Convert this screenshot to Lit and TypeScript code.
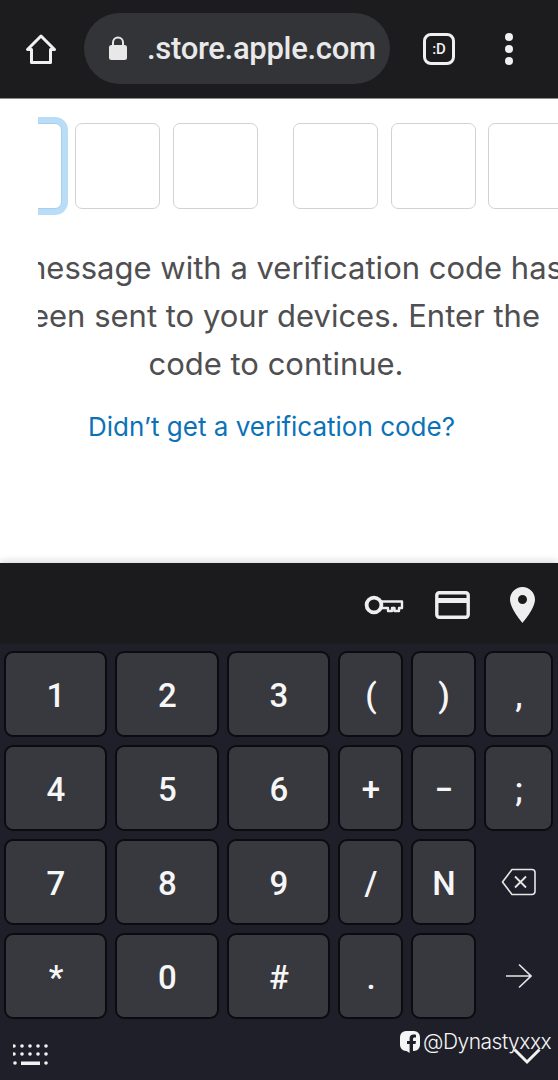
import { html, LitElement, css, svg } from 'lit';
import { customElement } from 'lit/decorators.js';

const ROWS = [
  ['1', '2', '3', '(', ')', ','],
  ['4', '5', '6', '+', '−', ';'],
  ['7', '8', '9', '/', 'N', 'back'],
  ['*', '0', '#', '.', '', 'next'],
];

const homeIcon = svg`<path d="M16 3 L2.5 16.5 H6.5 V29.5 H25.5 V16.5 H29.5 Z" fill="none" stroke="#f1f1f1" stroke-width="3" stroke-linejoin="round"/>`;
const lockIcon = svg`<path d="M5 9 V6.5 a5 5 0 0 1 10 0 V9" fill="none" stroke="#e8e8e8" stroke-width="2"/><rect x="1" y="9" width="18" height="15" rx="2.5" fill="#e8e8e8"/>`;
const keyIcon = svg`<path d="M15 6.5 H38 V13 H35 V16 H30.5 V13 H28 V16 H24 V13 H17" fill="none" stroke="#eee" stroke-width="2.4" stroke-linejoin="round"/><circle cx="10" cy="10" r="7.4" fill="none" stroke="#eee" stroke-width="3.8"/>`;
const cardIcon = svg`<rect x="1.8" y="1.8" width="31.4" height="24.4" rx="2.5" fill="none" stroke="#eee" stroke-width="3.4"/><rect x="2" y="7" width="31" height="5" fill="#eee"/>`;
const pinIcon = svg`<path fill-rule="evenodd" d="M12.5 0 C5.6 0 0 5.6 0 12.5 C0 21.5 12.5 36 12.5 36 C12.5 36 25 21.5 25 12.5 C25 5.6 19.4 0 12.5 0 Z M12.5 8 a4.5 4.5 0 1 1 0 9 a4.5 4.5 0 1 1 0 -9 Z" fill="#eee"/>`;
const backIcon = svg`<path d="M11 1.5 H31 a3 3 0 0 1 3 3 V23.5 a3 3 0 0 1 -3 3 H11 L1.5 14 Z" fill="none" stroke="#e6e6e6" stroke-width="1.6" stroke-linejoin="round"/><path d="M14 8.5 L25 19.5 M25 8.5 L14 19.5" stroke="#e6e6e6" stroke-width="1.8"/>`;
const nextIcon = svg`<path d="M1 13 H26 M14 1.5 L26 13 L14 24.5" fill="none" stroke="#e6e6e6" stroke-width="1.6"/>`;
const fbIcon = svg`<path d="M6 0 H14 a6 6 0 0 1 6 6 V14 a6 6 0 0 1 -6 6 H13 V13 H15.5 L16 10 H13 V8.2 C13 7 13.5 6.5 14.7 6.5 H16 V3.8 C15 3.6 14.3 3.5 13.4 3.5 C11 3.5 9.6 5 9.6 7.6 V10 H7 V13 H9.6 V22 L6.5 20 H6 a6 6 0 0 1 -6 -6 V6 a6 6 0 0 1 6 -6 Z" fill="#f5f5f5"/>`;

@customElement('app-root')
export class AppRoot extends LitElement {
  static styles = css`
    :host {
      display: block;
      width: 558px;
      height: 1080px;
      overflow: hidden;
      background: #fff;
      position: relative;
    }

    .page {
      display: flex;
      flex-direction: column;
      height: 1080px;
    }

    /* browser bar */
    .bar {
      flex: none;
      height: 99px;
      box-sizing: border-box;
      background: #1c1c1e;
      border-bottom: 1px solid #8b8b8b;
      display: flex;
      align-items: center;
      padding-left: 25px;
    }

    .bar svg {
      display: block;
      flex: none;
    }

    .url {
      width: 306px;
      height: 71px;
      margin-left: 27px;
      margin-top: -1px;
      box-sizing: border-box;
      background: #333438;
      border-radius: 36px;
      display: flex;
      align-items: center;
      padding-left: 24px;
    }

    .url span {
      margin-left: 19px;
      font: 500 31px 'Roboto', sans-serif;
      letter-spacing: -0.3px;
      color: #e9e9e9;
      white-space: nowrap;
    }

    .tabs {
      width: 32px;
      height: 32px;
      margin-left: 33px;
      box-sizing: border-box;
      border: 3px solid #f0f0f0;
      border-radius: 8px;
      display: flex;
      align-items: center;
      justify-content: center;
      font: 500 15px 'Roboto', sans-serif;
      color: #f0f0f0;
    }

    .dots {
      margin-left: 50px;
      display: flex;
      flex-direction: column;
      gap: 4px;
    }

    .dots i {
      width: 8px;
      height: 8px;
      border-radius: 50%;
      background: #f0f0f0;
    }

    /* web content, clipped on the left like the page is scrolled */
    .content {
      flex: 1;
      margin-left: 38px;
      overflow: hidden;
      padding-right: 44px;
      display: flex;
      flex-direction: column;
      align-items: center;
      font-family: 'Inter', sans-serif;
    }

    .digits {
      flex: none;
      margin-top: 24px;
      margin-left: -1.2px;
      height: 86px;
      display: flex;
      width: 0;
      justify-content: center;
      gap: 12.6px;
    }

    .digit {
      flex: none;
      width: 85px;
      height: 86px;
      box-sizing: border-box;
      border: 1.5px solid #d2d2d2;
      border-radius: 7px;
      background: #fff;
    }

    .digit.focus {
      border-color: #a9cdee;
      box-shadow: 0 0 0 6px #b9dcf7;
    }

    .digit.split {
      margin-left: 23px;
    }

    .msg {
      flex: none;
      margin-top: 35px;
      display: flex;
      flex-direction: column;
      align-items: center;
      font-size: 31px;
      line-height: 48px;
      color: #4f4f51;
      white-space: nowrap;
    }

    .link {
      flex: none;
      margin-top: 20px;
      margin-left: -9px;
      font-size: 26px;
      line-height: 38px;
      color: #0b72b8;
      white-space: nowrap;
    }

    /* keyboard */
    .kb {
      flex: none;
      height: 517px;
      position: relative;
      background: #1f1f29;
      box-shadow: 0 -3px 6px rgba(0, 0, 0, 0.12);
    }

    .tools {
      height: 81px;
      box-sizing: border-box;
      padding-top: 2px;
      background: #1b1b1d;
      display: flex;
      align-items: center;
      justify-content: flex-end;
      padding-right: 23px;
    }

    .tools svg {
      display: block;
    }

    .keys {
      display: grid;
      grid-template-columns: 103px 104px 103px 65px 65px 69px;
      grid-auto-rows: 86px;
      column-gap: 8px;
      row-gap: 8px;
      padding: 7px 0 0 4px;
    }

    .key {
      box-sizing: border-box;
      padding: 2px 0 0 1px;
      background: #38383f;
      border: 2px solid #0b0b10;
      border-radius: 9px;
      display: flex;
      align-items: center;
      justify-content: center;
      font: 500 33px 'Roboto', sans-serif;
      color: #f6f6f6;
    }

    .plain {
      display: flex;
      align-items: center;
      justify-content: center;
    }

    .foot {
      position: absolute;
      inset: auto 0 0 0;
      height: 45px;
    }

    .foot svg {
      position: absolute;
    }

    .tag {
      position: absolute;
      left: 400px;
      top: 466px;
      display: flex;
      align-items: center;
      gap: 3px;
      font: 300 21px 'Inter', sans-serif;
      letter-spacing: -0.5px;
      color: #f5f5f5;
      white-space: nowrap;
    }
  `;

  renderKey(k: string) {
    if (k === 'back') {
      return html`<div class="plain">
        <svg width="36" height="28" viewBox="0 0 36 28">${backIcon}</svg>
      </div>`;
    }
    if (k === 'next') {
      return html`<div class="plain">
        <svg width="27" height="26" viewBox="0 0 27 26">${nextIcon}</svg>
      </div>`;
    }
    return html`<div class="key">${k}</div>`;
  }

  render() {
    return html`
      <div class="page">
        <div class="bar">
          <svg width="32" height="32" viewBox="0 0 32 32">${homeIcon}</svg>
          <div class="url">
            <svg width="20" height="25" viewBox="0 0 20 25">${lockIcon}</svg>
            <span>.store.apple.com</span>
          </div>
          <div class="tabs">:D</div>
          <div class="dots"><i></i><i></i><i></i></div>
        </div>

        <div class="content">
          <div class="digits">
            <div class="digit focus"></div>
            <div class="digit"></div>
            <div class="digit"></div>
            <div class="digit split"></div>
            <div class="digit"></div>
            <div class="digit"></div>
          </div>
          <div class="msg">
            <span>A message with a verification code has</span>
            <span>been sent to your devices. Enter the</span>
            <span>code to continue.</span>
          </div>
          <div class="link">Didn’t get a verification code?</div>
        </div>

        <div class="kb">
          <div class="tools">
            <svg width="40" height="20" viewBox="0 0 40 20" style="margin-right:31px">${keyIcon}</svg>
            <svg width="35" height="28" viewBox="0 0 35 28" style="margin-right:40px">${cardIcon}</svg>
            <svg width="25" height="36" viewBox="0 0 25 36">${pinIcon}</svg>
          </div>
          <div class="keys">
            ${ROWS.flat().map((k) => this.renderKey(k))}
          </div>
          <div class="foot">
            <svg style="left:13px;top:9px" width="35" height="22" viewBox="0 0 35 22" fill="#f2f2f2">
              ${[1, 9, 17, 25, 33].map((x) => svg`<circle cx="${x}" cy="2" r="1.8"/><circle cx="${x}" cy="10" r="1.8"/>`)}
              <circle cx="2" cy="19" r="1.8"/>
              <circle cx="33" cy="19" r="1.8"/>
              <rect x="8" y="17.5" width="19" height="3.5"/>
            </svg>
            <svg style="left:513px;top:13px" width="28" height="17" viewBox="0 0 28 17">
              <path d="M1.5 1.5 L14 14 L26.5 1.5" fill="none" stroke="#f2f2f2" stroke-width="3"/>
            </svg>
          </div>
          <div class="tag">
            <svg width="20" height="22" viewBox="0 0 20 22">${fbIcon}</svg>
            <span>@Dynastyxxx</span>
          </div>
        </div>
      </div>
    `;
  }
}
